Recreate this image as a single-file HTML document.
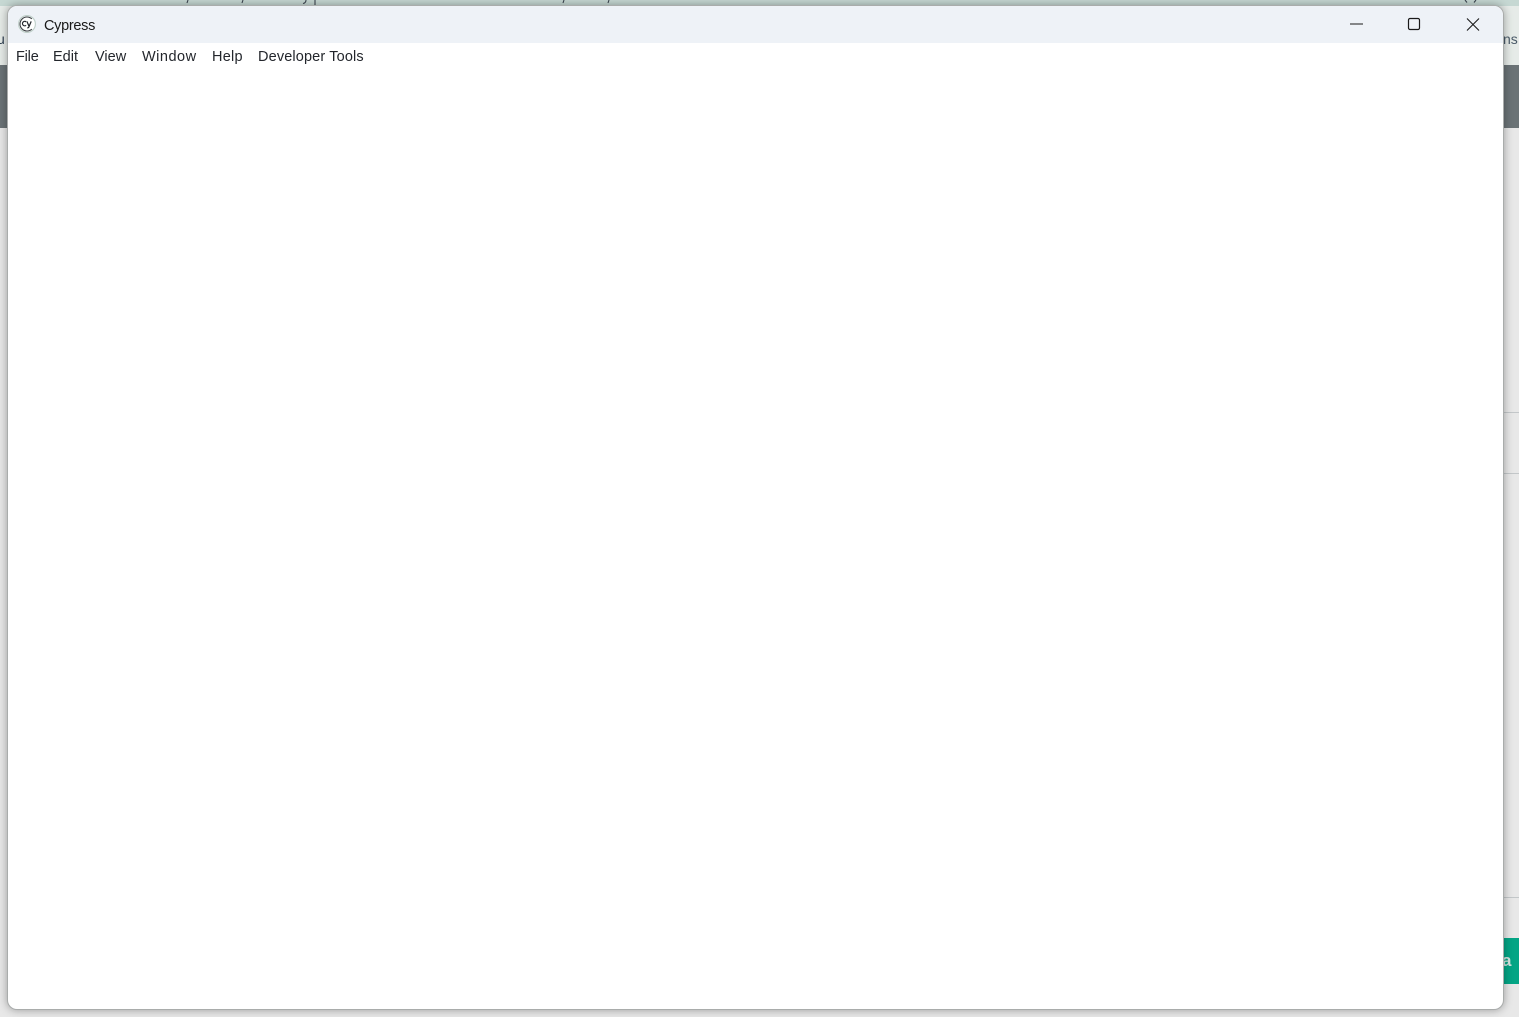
<!DOCTYPE html>
<html lang="en">
<head>
<meta charset="utf-8">
<title>Cypress</title>
<style>
html,body{margin:0;padding:0;width:1519px;height:1017px;overflow:hidden;background:#e8e8e8;font-family:"Liberation Sans",sans-serif}
.abs{position:absolute}
#bg{position:absolute;left:0;top:0;width:1519px;height:1017px;overflow:hidden}
#win{position:absolute;left:8px;top:6px;width:1495px;height:1003px;background:#fff;border-radius:9px;overflow:hidden}
#shadow{position:absolute;left:7px;top:5px;width:1497px;height:1005px;border-radius:10px;background:#a9acab;box-shadow:0 0 9px rgba(0,0,0,.34)}
#titlebar{position:absolute;left:0;top:0;width:1495px;height:37px;background:#eef2f7}
.t{position:absolute;white-space:nowrap;line-height:18px;font-size:14.5px;color:#23262c}
</style>
</head>
<body>
<div id="bg">
  <div class="abs" style="left:0;top:0;width:1519px;height:6px;background:#c6d8d3"></div>
  <div class="abs" style="left:0;top:6px;width:1519px;height:59px;background:#e6ebe8"></div>
  <div class="abs" style="left:0;top:65px;width:1519px;height:63px;background:#6b7376"></div>
  <div class="abs" style="left:0;top:128px;width:1519px;height:889px;background:#e8e8e8"></div>
  <div class="abs" style="left:1503px;top:412px;width:16px;height:1px;background:#c3c7c9"></div>
  <div class="abs" style="left:1503px;top:473px;width:16px;height:1px;background:#c3c7c9"></div>
  <div class="abs" style="left:1503px;top:897px;width:16px;height:1px;background:#c3c7c9"></div>
  <div class="abs" style="left:1503px;top:938px;width:16px;height:46px;background:#04a585"></div>
  <div class="t" style="left:1502px;top:952px;font-size:17px;font-weight:bold;color:#d3e4df">a</div>
  <div class="t" style="left:1503px;top:30px;font-size:14px;color:#4a5a68">ns</div>
  <div class="t" style="left:-3px;top:30px;font-size:14px;color:#2f3f50">u</div>
  <svg class="abs" style="left:0;top:0" width="1519" height="5" viewBox="0 0 1519 5">
    <path d="M188 0l-1 3M243 0l-1 3M306 0q0 3-3 3.500M315 0v5M564 0l-1 3M609 0l-1 3M1465 0l2 2.500M1476 0l-2 2.500" stroke="#3c4650" stroke-width="1.100" fill="none"/>
  </svg>
</div>

<div id="shadow"></div>

<div id="win">
  <div id="titlebar"></div>
  <svg class="abs" style="left:10px;top:9px" width="18" height="18" viewBox="0 0 18 18">
    <circle cx="9" cy="9" r="8.400" fill="#ffffff" stroke="#bfcfc9" stroke-width="1.100"/>
    <path d="M13.800 3.900A7 7 0 1 0 13.800 14.100" fill="none" stroke="#3a3d42" stroke-width="1.100"/>
    <path d="M8.100 6.900a2.200 2.200 0 1 0 0 3.400" fill="none" stroke="#23262c" stroke-width="1.200"/>
    <path d="M8.900 6.400l2 4.600M13.200 6.400l-2.300 5.500q-.4 1-1.600 1" fill="none" stroke="#23262c" stroke-width="1.200"/>
  </svg>
  <div class="t" style="left:36px;top:11px;color:#1a1a1a;letter-spacing:-.3px">Cypress</div>
  <div class="t" style="left:8px;top:42px;letter-spacing:-.2px">File</div>
  <div class="t" style="left:45px;top:42px">Edit</div>
  <div class="t" style="left:87px;top:42px">View</div>
  <div class="t" style="left:134px;top:42px;letter-spacing:.5px">Window</div>
  <div class="t" style="left:204px;top:42px;letter-spacing:.25px">Help</div>
  <div class="t" style="left:250px;top:42px;letter-spacing:.14px">Developer Tools</div>
  <svg class="abs" style="left:1335px;top:5px" width="150" height="26" viewBox="0 0 150 26">
    <path d="M7 13H20" stroke="#1a1a1a" stroke-width="1.100" fill="none"/>
    <rect x="65.500" y="7.500" width="11" height="11" rx="1.500" fill="none" stroke="#1a1a1a" stroke-width="1.200"/>
    <path d="M124 7.500L136 19.500M136 7.500L124 19.500" stroke="#1a1a1a" stroke-width="1.100" fill="none"/>
  </svg>
</div>
</body>
</html>
